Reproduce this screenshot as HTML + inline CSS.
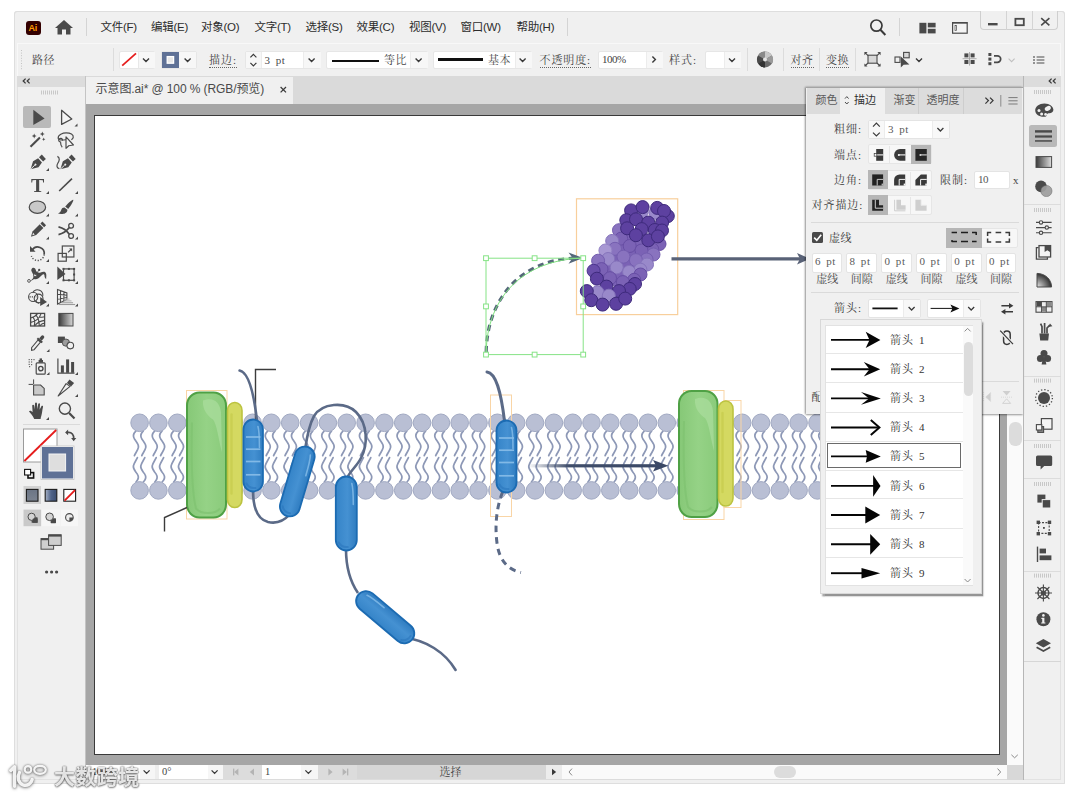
<!DOCTYPE html>
<html lang="zh-CN">
<head>
<meta charset="utf-8">
<title>示意图.ai</title>
<style>
html,body{margin:0;padding:0}
body{width:1080px;height:797px;position:relative;overflow:hidden;background:#fff;
 font-family:"Liberation Sans","Noto Sans CJK SC",sans-serif;font-size:12px;color:#333}
.a{position:absolute}
.sans{font-family:"Liberation Sans","Noto Sans CJK SC",sans-serif}
.serif{font-family:"Liberation Serif","Noto Serif CJK SC",serif}
.mono{font-family:"Liberation Mono","Noto Serif CJK SC",monospace}
.t{position:absolute;white-space:nowrap;line-height:1}
.box{position:absolute;background:#fff;box-sizing:border-box}
.vsep{position:absolute;width:1px;background:#d4d4d4}
svg{position:absolute;overflow:visible}
</style>
</head>
<body>

<!-- window frame -->
<div class="a" style="left:13.5px;top:11px;width:1051px;height:772.5px;background:#f0f0f0;border-radius:3px 3px 0 0;box-shadow:0 0 0 1px #e6e6e6 inset"></div>
<div class="a" style="left:17px;top:43px;width:1044px;height:737px;border:1px solid #e2e2e2;box-sizing:border-box"></div>
<div class="a" style="left:13.5px;top:11px;width:1051px;height:772.5px;border:1px solid #dedede;border-radius:3px 3px 0 0;box-sizing:border-box"></div>
<!-- menu bar -->
<div class="a" style="left:26px;top:21px;width:15px;height:14px;background:#330000;border-radius:3px"></div>
<div class="t sans" style="left:28.5px;top:23.5px;font-size:9px;font-weight:bold;color:#ff9a00;letter-spacing:-0.3px">Ai</div>
<svg style="left:54px;top:19px" width="20" height="16" viewBox="0 0 20 16"><path d="M10 1 L1 9 H3.5 V15.5 H8 V10.5 H12 V15.5 H16.5 V9 H19 Z" fill="#4a4a4a"/></svg>
<div class="vsep" style="left:86px;top:18px;height:18px"></div>
<div class="t sans" style="left:100.5px;top:21.5px;font-size:11.5px;letter-spacing:-.25px;color:#2c2c2c">文件(F)</div>
<div class="t sans" style="left:151px;top:21.5px;font-size:11.5px;letter-spacing:-.25px;color:#2c2c2c">编辑(E)</div>
<div class="t sans" style="left:201px;top:21.5px;font-size:11.5px;letter-spacing:-.25px;color:#2c2c2c">对象(O)</div>
<div class="t sans" style="left:254.5px;top:21.5px;font-size:11.5px;letter-spacing:-.25px;color:#2c2c2c">文字(T)</div>
<div class="t sans" style="left:305.5px;top:21.5px;font-size:11.5px;letter-spacing:-.25px;color:#2c2c2c">选择(S)</div>
<div class="t sans" style="left:356.5px;top:21.5px;font-size:11.5px;letter-spacing:-.25px;color:#2c2c2c">效果(C)</div>
<div class="t sans" style="left:409px;top:21.5px;font-size:11.5px;letter-spacing:-.25px;color:#2c2c2c">视图(V)</div>
<div class="t sans" style="left:460.5px;top:21.5px;font-size:11.5px;letter-spacing:-.25px;color:#2c2c2c">窗口(W)</div>
<div class="t sans" style="left:516.5px;top:21.5px;font-size:11.5px;letter-spacing:-.25px;color:#2c2c2c">帮助(H)</div>
<div class="vsep" style="left:567px;top:18px;height:18px"></div>
<!-- control bar -->
<div class="a" style="left:17px;top:43px;width:1044px;height:33px;background:#f0f0f0;border:1px solid #f8f8f8;border-bottom:none;box-sizing:border-box"></div>
<!-- tab bar -->
<div class="a" style="left:86px;top:76px;width:937px;height:27.5px;background:#dadada"></div>
<div class="a" style="left:86px;top:77px;width:207px;height:26.5px;background:#f0f0f0"></div>
<div class="t sans" style="left:95.6px;top:82.5px;font-size:12px;letter-spacing:-.1px;color:#4a4a4a">示意图.ai* @ 100 % (RGB/预览)</div>
<!-- canvas bg -->
<div class="a" style="left:86px;top:103.5px;width:937px;height:661.5px;background:#a6a6a6"></div>
<div class="a" style="left:94px;top:114.5px;width:906px;height:640.5px;background:#fff;border:1px solid #3a3a3a;box-sizing:border-box"></div>

<!-- control bar contents -->
<div class="t serif" style="left:32px;top:54.5px;font-size:11px;color:#444;letter-spacing:.6px">路径</div>
<div class="vsep" style="left:113px;top:48px;height:23px;background:#dcdcdc"></div>
<!-- fill -->
<div class="box" style="left:119px;top:51px;width:36px;height:18px;border-radius:2px;border:1px solid #e6e6e6"></div>
<div class="a" style="left:138px;top:52px;width:16px;height:16px;background:#f7f7f7;border-left:1px solid #e8e8e8"></div>
<!-- stroke -->
<div class="box" style="left:161px;top:51px;width:36px;height:18px;border-radius:2px;border:1px solid #e6e6e6"></div>
<div class="a" style="left:162px;top:52px;width:17px;height:16px;background:#5f7196"></div>
<div class="a" style="left:179px;top:52px;width:17px;height:16px;background:#f7f7f7"></div>
<div class="t serif" style="left:209px;top:55px;font-size:11px;color:#444;letter-spacing:1px;border-bottom:1px dotted #666;padding-bottom:1px">描边:</div>
<!-- weight -->
<div class="box" style="left:245px;top:51px;width:76px;height:18px;border-radius:2px;border:1px solid #e6e6e6"></div>
<div class="a" style="left:246px;top:52px;width:15px;height:16px;background:#f7f7f7;border-right:1px solid #ececec"></div>
<div class="a" style="left:303px;top:52px;width:17px;height:16px;background:#f7f7f7;border-left:1px solid #ececec"></div>
<div class="t serif" style="left:264.5px;top:55px;font-size:11px;color:#4a4a4a;letter-spacing:.7px;word-spacing:1.5px">3 pt</div>
<!-- profile -->
<div class="box" style="left:325.5px;top:51px;width:102px;height:18px;border-radius:2px;border:1px solid #e6e6e6"></div>
<div class="a" style="left:410px;top:52px;width:16.5px;height:16px;background:#f7f7f7;border-left:1px solid #ececec"></div>
<div class="a" style="left:332px;top:60px;width:47px;height:1.6px;background:#111"></div>
<div class="t serif" style="left:384px;top:55px;font-size:11px;letter-spacing:.6px;color:#444">等比</div>
<!-- brush -->
<div class="box" style="left:433px;top:51px;width:99px;height:18px;border-radius:2px;border:1px solid #e6e6e6"></div>
<div class="a" style="left:514.5px;top:52px;width:16.5px;height:16px;background:#f7f7f7;border-left:1px solid #ececec"></div>
<div class="a" style="left:438px;top:58px;width:45px;height:2.6px;background:#111"></div>
<div class="t serif" style="left:488px;top:55px;font-size:11px;letter-spacing:.6px;color:#444">基本</div>
<!-- opacity -->
<div class="t serif" style="left:539.5px;top:55px;font-size:11px;color:#444;border-bottom:1px dotted #666;padding-bottom:1px;letter-spacing:.9px">不透明度:</div>
<div class="box" style="left:598px;top:51px;width:65px;height:18px;border-radius:2px;border:1px solid #e6e6e6"></div>
<div class="a" style="left:646px;top:52px;width:16px;height:16px;background:#f7f7f7;border-left:1px solid #ececec"></div>
<div class="t serif" style="left:602px;top:53.5px;font-size:11px;color:#444;letter-spacing:-.5px">100%</div>
<div class="t serif" style="left:669px;top:55px;font-size:11px;color:#444;letter-spacing:1px">样式:</div>
<div class="box" style="left:705px;top:51px;width:36px;height:18px;border-radius:2px;border:1px solid #e6e6e6"></div>
<div class="a" style="left:724px;top:52px;width:16px;height:16px;background:#f7f7f7;border-left:1px solid #ececec"></div>
<div class="vsep" style="left:747px;top:48px;height:23px;background:#dcdcdc"></div>
<div class="vsep" style="left:783px;top:48px;height:23px;background:#dcdcdc"></div>
<div class="t serif" style="left:790.5px;top:55px;font-size:11px;color:#444;letter-spacing:.6px;border-bottom:1px dotted #666;padding-bottom:1px">对齐</div>
<div class="vsep" style="left:819px;top:48px;height:23px;background:#dcdcdc"></div>
<div class="t serif" style="left:826px;top:55px;font-size:11px;color:#444;letter-spacing:.6px;border-bottom:1px dotted #666;padding-bottom:1px">变换</div>
<div class="vsep" style="left:855px;top:48px;height:23px;background:#dcdcdc"></div>
<div class="vsep" style="left:899px;top:18px;height:18px"></div>
<!-- window buttons -->
<div class="a" style="left:980px;top:11px;width:78px;height:19px;border:1px solid #cfcfcf;border-top:none;border-radius:0 0 4px 4px;box-sizing:border-box;background:#f0f0f0"></div>
<div class="a" style="left:1006px;top:11px;width:1px;height:19px;background:#d4d4d4"></div>
<div class="a" style="left:1031.5px;top:11px;width:1px;height:19px;background:#d4d4d4"></div>
<svg style="left:0;top:0" width="1080" height="797" viewBox="0 0 1080 797">
<g fill="none" stroke="#3a3a3a" stroke-width="1.4">
<!-- grip dots of control bar -->
<path d="M21.5 50 V70" stroke="#c4c4c4" stroke-width="1" stroke-dasharray="1 1.6"/>
<!-- chevrons -->
<path d="M143 58.6 l3 3 3-3 M184.6 58.6 l3 3 3-3 M308.6 58.6 l3 3 3-3 M415.6 58.6 l3 3 3-3 M519.6 58.6 l3 3 3-3 M729 58.6 l3 3 3-3 M916 58.6 l3 3 3-3"/>
<path d="M652.4 56.6 l3 3 -3 3"/>
<path d="M1008.6 58.6 l3 3 3-3" stroke="#c0c0c0" stroke-width="1.1"/>
<path d="M250.4 57.4 l3-3 3 3 M250.4 62.8 l3 3 3-3" stroke-width="1.2"/>
<!-- fill slash -->
<path d="M122.2 65.6 L136 53.4" stroke="#e51c1c" stroke-width="1.8"/>
<!-- stroke inner square -->
<rect x="167.2" y="56.6" width="6.4" height="6.6" fill="#e8e8e8" stroke="#fff" stroke-width="1.3"/>
<!-- search -->
<circle cx="876.4" cy="25.6" r="5.6" stroke="#3a3a3a" stroke-width="1.7"/><path d="M880.4 29.8 L885.4 35" stroke-width="2"/>
<!-- window buttons icons -->
<path d="M988 24.2 H997.6" stroke="#4a4a4a" stroke-width="2.4"/>
<rect x="1015.4" y="18.8" width="8.4" height="6.4" stroke="#4a4a4a" stroke-width="1.8"/>
<path d="M1041.2 18.2 L1049.4 25.4 M1049.4 18.2 L1041.2 25.4" stroke="#4a4a4a" stroke-width="1.6"/>
</g>
<g fill="#4a4a4a">
<!-- workspace icon -->
<rect x="919.4" y="22.8" width="7" height="10.6"/><rect x="927.8" y="22.8" width="7.8" height="4.6"/><rect x="927.8" y="28.8" width="7.8" height="4.6"/>
<rect x="952.6" y="22.6" width="14.6" height="10.6" fill="#f4f4f4" stroke="#4a4a4a" stroke-width="1.2"/><rect x="952.6" y="22" width="14.6" height="1.6"/><rect x="955" y="25.4" width="1.6" height="5" fill="none" stroke="#4a4a4a" stroke-width=".7"/>
<!-- recolor wheel -->
<circle cx="765" cy="59.4" r="8" fill="#6a6a6a"/>
<path d="M765 59.4 L765 51.4 A8 8 0 0 1 771.9 55.4Z" fill="#c8c8c8"/><path d="M765 59.4 L771.9 55.4 A8 8 0 0 1 771.9 63.4Z" fill="#9a9a9a"/><path d="M765 59.4 L758.1 63.4 A8 8 0 0 1 758.1 55.4Z" fill="#4a4a4a"/><path d="M765 59.4 L758.1 55.4 A8 8 0 0 1 765 51.4Z" fill="#8a8a8a"/><path d="M765 59.4 L765 67.4 A8 8 0 0 1 758.1 63.4Z" fill="#333"/>
<circle cx="765" cy="59.4" r="2" fill="#e4e4e4"/>
<!-- transform icon -->
<rect x="868" y="55.2" width="9" height="8" fill="#d8d8d8" stroke="#4a4a4a" stroke-width="1.1"/>
<path d="M864.4 52 h3.2 l-1.2 1.2 2 2 -.8 .8 -2 -2 -1.2 1.2z M880.6 52 v3.2 l-1.2 -1.2 -2 2 -.8 -.8 2 -2 -1.2 -1.2z M864.4 66.6 v-3.2 l1.2 1.2 2 -2 .8 .8 -2 2 1.2 1.2z M880.6 66.6 h-3.2 l1.2 -1.2 -2 -2 .8 -.8 2 2 1.2 -1.2z"/>
<!-- isolate icon -->
<rect x="895" y="57" width="5" height="5.4" fill="none" stroke="#4a4a4a" stroke-width="1.1"/>
<rect x="903.6" y="52.4" width="5.6" height="5.4" fill="#d8d8d8" stroke="#4a4a4a" stroke-width="1.1"/>
<path d="M900.8 56.4 V67.4 L903.6 64.8 L909.4 64.4Z"/>
<!-- grid icon -->
<rect x="964.4" y="53.4" width="4" height="4"/><rect x="970.6" y="53.4" width="4" height="4"/><rect x="964.4" y="60" width="4" height="4"/><rect x="970.6" y="60" width="4" height="4"/>
<path d="M962.6 58.7 H976.6 M969.5 52 V65.6" stroke="#9a9a9a" stroke-width=".8"/>
<!-- align to icon -->
<rect x="988.4" y="53" width="3" height="3"/><rect x="988.4" y="57.6" width="3" height="3"/><rect x="988.4" y="62.2" width="3" height="3"/>
<path d="M994 55.8 H997.4 A3.3 3.3 0 0 1 997.4 62.4 H994" fill="none" stroke="#4a4a4a" stroke-width="1.7"/>
<!-- list icon -->
<path d="M1036.6 57 H1044.4 M1036.6 60 H1044.4 M1036.6 63 H1044.4" stroke="#4a4a4a" stroke-width="1.2"/><rect x="1033.2" y="56.3" width="1.6" height="1.4"/><rect x="1033.2" y="59.3" width="1.6" height="1.4"/><rect x="1033.2" y="62.3" width="1.6" height="1.4"/>
<!-- tab close -->
<path d="M280.6 87 L286 92.4 M286 87 L280.6 92.4" stroke="#3a3a3a" stroke-width="1.25"/>
</g>
</svg>

<!-- left toolbar -->
<div class="a" style="left:17px;top:76px;width:68px;height:11px;background:#dcdcdc"></div>
<div class="a" style="left:85px;top:76px;width:1px;height:704px;background:#c4c4c4"></div>
<div class="a" style="left:23px;top:106px;width:28px;height:22px;background:#b9b9b9;border-radius:2px"></div>
<div class="a" style="left:23px;top:424px;width:57px;height:1px;background:#dadada"></div>
<div class="t serif" style="left:30.6px;top:176.4px;font-size:19px;font-weight:bold;color:#4a4a4a;transform:scaleX(1.05);transform-origin:0 0">T</div>
<svg style="left:0;top:0" width="1080" height="797" viewBox="0 0 1080 797">
<g fill="#4a4a4a" stroke="none">
<!-- header chevrons -->
<path d="M25.6 78.6 L23.2 81 L25.6 83.4 M29.6 78.6 L27.2 81 L29.6 83.4" fill="none" stroke="#3a3a3a" stroke-width="1.3"/>
<!-- grip -->
<g stroke="#c8c8c8" stroke-width="1" fill="none"><path d="M41.5 90.5v4M43.5 90.5v4M45.5 90.5v4M47.5 90.5v4M49.5 90.5v4M51.5 90.5v4M53.5 90.5v4M55.5 90.5v4M57.5 90.5v4"/></g>
<!-- small corner triangles -->
<g fill="#4a4a4a">
<path d="M77.5 123.5v3h-3z"/>
<path d="M49 168v3h-3z"/>
<path d="M49 191v3h-3zM78 191v3h-3z"/>
<path d="M49 213.5v3h-3zM78 213.5v3h-3z"/>
<path d="M49 236.5v3h-3zM78 236.5v3h-3z"/>
<path d="M49 259v3h-3zM78 259v3h-3z"/>
<path d="M49 281v3h-3zM78 281v3h-3z"/>
<path d="M49 303.5v3h-3zM78 303.5v3h-3z"/>
<path d="M49.5 349v3h-3z"/>
<path d="M49.5 372v3h-3zM78 372v3h-3z"/>
<path d="M78 394v3h-3z"/>
<path d="M49 417v3h-3z"/>
</g>
<!-- r1 selection tools -->
<path d="M33.3 109.8 V125 L44.6 118.4 Z"/>
<path d="M61.6 110.3 V124.4 L71.8 119 Z" fill="#f4f4f4" stroke="#4a4a4a" stroke-width="1.3" stroke-linejoin="round"/>
<!-- r2 magic wand -->
<g transform="translate(37.7 140)">
<path d="M-7.2 6.8 L2.2 -2.4" stroke="#4a4a4a" stroke-width="2.1" fill="none"/>
<path d="M-3.5 -6.4 l.7 1.7 1.7 .7 -1.7 .7 -.7 1.7 -.7 -1.7 -1.7 -.7 1.7 -.7z"/>
<path d="M4.6 -8.4 l.7 1.7 1.7 .7 -1.7 .7 -.7 1.7 -.7 -1.7 -1.7 -.7 1.7 -.7z"/>
<path d="M6 -2.4 l.5 1.2 1.2 .5 -1.2 .5 -.5 1.2 -.5 -1.2 -1.2 -.5 1.2 -.5z"/>
</g>
<!-- r2 lasso -->
<g transform="translate(67.6 141.6) scale(.94)" fill="none" stroke="#4a4a4a" stroke-width="1.25">
<path d="M-1.7 -2 C-6 -1.5 -9.5 -1 -10 -3.5 C-10.5 -7.5 -5 -9.3 -1.5 -9.3 C3 -9.3 6.5 -7.5 6 -4.5 C5.8 -3.4 5 -2.6 4 -2"/>
<path d="M-5.5 -1 a2 2 0 1 0 -2 1.5 c0 2 .5 4.5 1.8 5.5"/>
<path d="M-1.7 -5 V7.2 L1.2 4.4 L6.2 3.6 Z" fill="#f4f4f4" stroke-linejoin="round"/>
</g>
<!-- r3 pen -->
<g transform="translate(37.4 162.8) rotate(47)">
<path d="M0 9.4 L-4 2.2 L-2.8 -3.6 H2.8 L4 2.2 Z"/>
<rect x="-3" y="-8.8" width="6" height="3.8"/>
<path d="M0 9.4 V3.5" stroke="#f0f0f0" stroke-width=".9"/>
<circle cx="0" cy="2.6" r="1" fill="#f0f0f0"/>
</g>
<!-- r3 curvature pen -->
<g transform="translate(67.2 162.8) rotate(47)">
<path d="M0 9.4 L-4 2.2 L-2.8 -3.6 H2.8 L4 2.2 Z"/>
<rect x="-3" y="-8.8" width="6" height="3.8"/>
<path d="M0 9.4 V3.5" stroke="#f0f0f0" stroke-width=".9"/>
<circle cx="0" cy="2.6" r="1" fill="#f0f0f0"/>
</g>
<path d="M57.4 156.4 C60.3 157.8 59.3 160.8 57.8 163.3 C56.3 165.8 56.8 168.3 59.4 168.6" fill="none" stroke="#4a4a4a" stroke-width="1.2"/>
<!-- r4 line -->
<path d="M59.2 191 L72 178.6" stroke="#4a4a4a" stroke-width="1.6" fill="none"/>
<!-- r5 ellipse, brush -->
<ellipse cx="37.4" cy="207.2" rx="8.2" ry="6.2" fill="#c9c9c9" stroke="#4a4a4a" stroke-width="1.2"/>
<g transform="translate(66 207)">
<path d="M7.2 -7.2 C8 -6.5 5 -1.5 2.2 2 L-.8 -.4 C1.8 -3.6 6.4 -7.8 7.2 -7.2Z"/>
<path d="M-1.6 .4 L1.4 2.8 C1.6 5.2 -1 7 -3.5 7 C-5.6 7.1 -7 7 -8 6.6 C-6 5.8 -5.2 4.4 -4.6 2.6 C-4.2 1.2 -3 .3 -1.6 .4Z"/>
</g>
<!-- r6 pencil, scissors -->
<g transform="translate(37.6 230) rotate(45)">
<path d="M-2.6 -9.4 H2.6 V-6.6 H-2.6Z"/>
<path d="M-2.6 -5.6 H2.6 V4.6 L0 9.4 L-2.6 4.6Z"/>
<path d="M-1.2 5.2 H1.2 L0 7.4Z" fill="#f0f0f0"/>
</g>
<g transform="translate(66.5 231)" fill="none" stroke="#4a4a4a">
<circle cx="4.6" cy="-5.2" r="2.4" stroke-width="1.3"/>
<circle cx="4.6" cy="5" r="2.4" stroke-width="1.3"/>
<path d="M-8 -4.2 C-3 -3 0 -1 2.8 3.2 M-8 3.6 C-3 2.6 0 .4 2.8 -3.4" stroke-width="1.7"/>
</g>
<!-- r7 rotate, scale -->
<g transform="translate(37.6 253.5)">
<path d="M-5.4 -3.6 A6.6 6.6 0 0 1 6.6 1" fill="none" stroke="#4a4a4a" stroke-width="1.7"/>
<path d="M6.6 1 A6.6 6.6 0 0 1 -6.2 2.6" fill="none" stroke="#4a4a4a" stroke-width="1.4" stroke-dasharray="1.2 1.6"/>
<path d="M-7.6 -7.4 V-1.8 H-2Z"/>
</g>
<g transform="translate(66.5 254)" fill="none" stroke="#4a4a4a" stroke-width="1.2">
<rect x="-4.2" y="-8" width="11.6" height="11" />
<rect x="-8.4" y="-.6" width="8.2" height="7.8"/>
<path d="M1.6 -1.6 L5 -5"/><path d="M2.6 -5.6 H5.6 V-2.6Z" fill="#4a4a4a" stroke="none"/>
</g>
<!-- r8 width, free transform -->
<g transform="translate(37.6 275.5)">
<path d="M-8.4 5.2 C-5 4.6 -3.4 2 -4.4 -1 C-5.2 -3.6 -7 -4.6 -6 -6.6 C-5 -8.6 -2.4 -8 -2 -6 C-1.4 -3 1 -2.4 3 -3 C5.4 -3.8 8 -4.4 8.6 -1.4 C9 .8 8.4 2.4 8.6 3.6 C7 3 7 1 6.8 -.4 C6.6 -2 5 -1.4 3.6 .2 C1.6 2.6 -1.2 4.6 -3.6 3.4 C-5 4.6 -6.6 5.6 -8.4 5.2Z"/>
<circle cx="-8.6" cy="5.4" r="1.4" fill="#f0f0f0" stroke="#4a4a4a" stroke-width=".9"/>
<circle cx="-2.6" cy="-.2" r="1.5" fill="#f0f0f0" stroke="#4a4a4a" stroke-width=".9"/>
<circle cx="1.6" cy="-5.6" r="1.1"/>
<path d="M-2.6 -.2 L1.6 -5.6" stroke="#4a4a4a" stroke-width=".8"/>
</g>
<g transform="translate(66.5 275.5)">
<rect x="-3" y="-6.6" width="10.6" height="11.4" fill="none" stroke="#4a4a4a" stroke-width="1.2"/>
<path d="M-9.2 -9 V4.4 L-1 -1.6Z"/>
<g><rect x="-4" y="-7.6" width="2" height="2"/><rect x="1.4" y="-7.6" width="2" height="2"/><rect x="6.6" y="-7.6" width="2" height="2"/><rect x="6.6" y="-2" width="2" height="2"/><rect x="6.6" y="3.8" width="2" height="2"/><rect x="1.4" y="3.8" width="2" height="2"/><rect x="-4" y="3.8" width="2" height="2"/></g>
</g>
<!-- r9 shape builder, perspective grid -->
<g transform="translate(37.6 297.5)" fill="none" stroke="#4a4a4a" stroke-width="1.1">
<circle cx="-4.4" cy="-.6" r="4.6"/>
<path d="M-4.6 -5 C-3.6 -7.6 -.2 -8.2 2 -7.2 C4.8 -6 5.4 -3.6 5.2 -1.6 M-1.8 3.2 C-1 4.6 .2 5.4 1.4 5.6"/>
<circle cx="1" cy="1" r="4.4"/>
<path d="M-8 -.6 H-1" stroke-dasharray="1.2 1"/>
<path d="M2.6 -.6 V8.6 L9.4 4.6Z" fill="#4a4a4a" stroke="none"/>
</g>
<g transform="translate(66.5 297.5)" fill="none" stroke="#4a4a4a" stroke-width="1.1">
<path d="M-9 -8 L.4 -4.6 V2 L-9 6.6Z M-9 -3.2 L.4 -2.2 M-9 1.8 L.4 0 M-6 -7 V5.2 M-2.6 -5.8 V3.6"/>
<path d="M-1 1.6 H3" stroke="#bdbdbd"/><path d="M-3 3.4 H5" stroke="#b0b0b0"/><path d="M-5 5.2 H6.6" stroke="#a4a4a4"/><path d="M-8 7 H8.6" stroke="#9a9a9a"/>
</g>
<!-- r10 mesh, gradient -->
<g transform="translate(37.6 320)" fill="none" stroke="#4a4a4a" stroke-width="1.1">
<rect x="-7" y="-6.6" width="14" height="12.6" stroke-width="1.3"/>
<path d="M-7 -2 C-3 -3 -1 -5 0 -6.6 M-7 2.4 C-2 1.6 2 -2 3.6 -6.6 M-3 6 C-1 3 3 1 7 .4 M2.4 6 C3 4.4 5 3.4 7 3.2 M-1.4 -4.6 C1 -2 2 3 1.4 6 M-4.6 -2.6 C-3 -1 -2.6 3 -3.4 6 M2 -3 C4 -2.6 6 -2.8 7 -3.2"/>
</g>
<defs><linearGradient id="tg" x1="0" x2="1" y1="0" y2="0"><stop offset="0" stop-color="#3a3a3a"/><stop offset="1" stop-color="#d8d8d8"/></linearGradient></defs>
<rect x="58.8" y="313.4" width="14.2" height="12.6" fill="url(#tg)" stroke="#4a4a4a" stroke-width="1"/>
<!-- r11 eyedropper, blend -->
<g transform="translate(37.6 343) rotate(40)">
<path d="M-1.6 -2.6 H1.6 V7.4 L0 9.4 L-1.6 7.4Z" fill="#f0f0f0" stroke="#4a4a4a" stroke-width="1.1"/>
<rect x="-3.2" y="-4.4" width="6.4" height="2"/>
<path d="M-1.7 -4.4 V-7.6 A1.7 1.9 0 0 1 1.7 -7.6 V-4.4Z"/>
</g>
<g transform="translate(66.5 343)">
<rect x="-8.6" y="-6.4" width="7" height="6.4"/>
<circle cx="-.6" cy="-.4" r="3.6" fill="#9c9c9c" stroke="#4a4a4a" stroke-width=".9"/>
<circle cx="3.8" cy="2.6" r="3.3" fill="#f0f0f0" stroke="#4a4a4a" stroke-width="1.1"/>
</g>
<!-- r12 symbol sprayer, graph -->
<g transform="translate(37.6 367)">
<rect x="-1.4" y="-4.2" width="9" height="11.4" rx="1" fill="#f0f0f0" stroke="#4a4a4a" stroke-width="1.2"/>
<rect x="1" y="-7" width="4.4" height="2.6"/><rect x="2" y="-8.6" width="2.4" height="1.6"/>
<circle cx="3.2" cy="1.6" r="2.2" fill="#f0f0f0" stroke="#4a4a4a" stroke-width="1.4"/>
<g fill="#666"><rect x="-9" y="-8" width="1.2" height="1.2"/><rect x="-6.6" y="-8" width="1.2" height="1.2"/><rect x="-4.2" y="-8" width="1.2" height="1.2"/><rect x="-9" y="-5.6" width="1.2" height="1.2"/><rect x="-6.6" y="-5.6" width="1.2" height="1.2"/><rect x="-9" y="-3.2" width="1.2" height="1.2"/><rect x="-6.6" y="-3" width="1.2" height="1.2"/><rect x="-8.6" y="-1" width="1.2" height="1.2"/></g>
</g>
<g transform="translate(66.5 367)">
<path d="M-8.6 -8.6 V6.2 H8" fill="none" stroke="#4a4a4a" stroke-width="1.2"/>
<rect x="-5.6" y="-1.6" width="3" height="7.4"/><rect x="-.4" y="-7.6" width="3" height="13.4"/><rect x="4.6" y="-5" width="3" height="10.8"/>
</g>
<!-- r13 artboard, slice -->
<g transform="translate(37.6 389)">
<path d="M-4 -4 H3 L6.6 -.6 V6 H-4Z" fill="#c9c9c9" stroke="#4a4a4a" stroke-width="1.1"/>
<path d="M-9 -4.6 H-4.6 M-4 -9.6 V-5" stroke="#4a4a4a" stroke-width="1" fill="none"/>
</g>
<g transform="translate(66.5 389)">
<path d="M-8.4 7 L-.4 -5.4 L3.6 -2.6 Z" fill="#f0f0f0" stroke="#4a4a4a" stroke-width="1.1" stroke-linejoin="round"/>
<path d="M.4 -6 L3 -9.4 L7.6 -6 L4.6 -2.6Z"/>
</g>
<!-- r14 hand, zoom -->
<g transform="translate(37.6 411)">
<path d="M-3.4 8 C-4.6 5 -7 2.6 -8.6 .6 C-8 -.8 -6.4 -.4 -5 1.2 L-5.4 -5.4 C-5.2 -6.6 -3.8 -6.6 -3.4 -5.4 L-2.8 -1.6 L-2.6 -7.6 C-2.4 -8.8 -.8 -8.8 -.6 -7.6 L-.4 -1.8 L.6 -7 C.9 -8.2 2.4 -8 2.4 -6.8 L2 -1.2 L3.8 -4.8 C4.4 -5.8 5.8 -5.2 5.4 -4 C4.6 -1 4.6 2 3.8 4.4 C3.4 5.8 3 7 3 8Z"/>
</g>
<g transform="translate(66.5 411)" fill="none" stroke="#4a4a4a">
<circle cx="-1.6" cy="-2.4" r="5.6" stroke-width="1.4"/>
<path d="M2.6 2 L8 7.6" stroke-width="2.2"/>
</g>
<!-- fill / stroke -->
<rect x="23.5" y="429" width="33.5" height="33" fill="#fff" stroke="#9a9a9a" stroke-width="1"/>
<path d="M24.4 461 L56.2 430" stroke="#e51c1c" stroke-width="1.8" fill="none"/>
<rect x="41" y="446" width="33" height="33.5" fill="#fff" stroke="#c4c4c4" stroke-width=".8"/>
<rect x="42" y="447" width="31" height="31.5" fill="#5f7196"/>
<rect x="49" y="454" width="16.6" height="17" fill="#dedede" stroke="#f4f4f4" stroke-width="1"/>
<g transform="translate(70.5 435.4)"><path d="M-2.6 -3 C1.4 -3.4 3.4 -.4 3.2 3" fill="none" stroke="#4a4a4a" stroke-width="1.7"/><path d="M-2.4 -5.8 V-.2 L-5.4 -3Z M.6 2.6 H5.8 L3.2 5.8Z"/></g>
<rect x="28" y="472.6" width="5.6" height="5.4" fill="#f0f0f0" stroke="#111" stroke-width="1.6"/>
<rect x="24.6" y="469.4" width="6" height="5.6" fill="#fff" stroke="#111" stroke-width="1.1"/>
<!-- color / gradient / none -->
<rect x="23.5" y="486" width="17.5" height="18" fill="#d2d2d2"/>
<defs><linearGradient id="cg1" x1="0" x2="0" y1="0" y2="1"><stop offset="0" stop-color="#6b7585"/><stop offset="1" stop-color="#7b8390"/></linearGradient>
<linearGradient id="cg2" x1="0" x2="1" y1="0" y2="0"><stop offset="0" stop-color="#a9b4c8"/><stop offset=".5" stop-color="#50648a"/><stop offset="1" stop-color="#3b4d70"/></linearGradient></defs>
<rect x="26.4" y="489.4" width="11.6" height="11.8" fill="url(#cg1)" stroke="#1c1c1c" stroke-width="1.1"/>
<rect x="45.2" y="489.4" width="11.6" height="11.8" fill="url(#cg2)" stroke="#1c1c1c" stroke-width="1.1"/>
<rect x="63.8" y="489.4" width="11.8" height="11.8" fill="#fff" stroke="#1c1c1c" stroke-width="1.1"/>
<path d="M64.6 500.6 L75 490.2" stroke="#e51c1c" stroke-width="1.9"/>
<!-- draw modes -->
<rect x="23.5" y="509.6" width="17.6" height="16.6" fill="#c9c9c9"/>
<rect x="41.6" y="509.6" width="18.4" height="16.6" fill="#f6f6f6"/><rect x="60.6" y="509.6" width="17.4" height="16.6" fill="#f6f6f6"/>
<g transform="translate(33 518)"><rect x="-1.4" y="-.8" width="6" height="5.6" rx=".6"/><circle cx="-1.4" cy="-1.2" r="3.6" fill="#d4d4d4" stroke="#4a4a4a" stroke-width="1"/><rect x="-.2" y=".4" width="4.8" height="4.4" rx=".4"/></g>
<g transform="translate(51 518)"><rect x="-.4" y=".2" width="5.4" height="5" rx=".6"/><circle cx="-1.4" cy="-1.2" r="3.8" fill="#d4d4d4" stroke="#4a4a4a" stroke-width="1"/></g>
<g transform="translate(69.4 517.4)"><circle cx="0" cy="0" r="3.8" fill="#ececec" stroke="#4a4a4a" stroke-width="1.1"/><path d="M0 0 H3.8 A3.8 3.8 0 0 1 0 3.8Z"/></g>
<!-- screen mode -->
<rect x="41" y="538.6" width="12.6" height="10.6" fill="#cfcfcf" stroke="#4a4a4a" stroke-width="1"/><rect x="41" y="538.4" width="12.6" height="1.8"/>
<rect x="48.6" y="534.8" width="12.6" height="10.6" fill="#cfcfcf" stroke="#4a4a4a" stroke-width="1"/><rect x="48.6" y="534.6" width="12.6" height="2"/>
<circle cx="46.6" cy="572" r="1.6"/><circle cx="51.6" cy="572" r="1.6"/><circle cx="56.6" cy="572" r="1.6"/>
</g>
</svg>

<!-- scrollbars & status bar -->
<div class="a" style="left:1007px;top:103px;width:16px;height:662px;background:#fafafa"></div>
<div class="a" style="left:1008.8px;top:422px;width:13px;height:23.5px;background:#dcdcdc;border-radius:6px"></div>
<div class="a" style="left:86px;top:764.5px;width:937px;height:15px;background:#dcdcdc"></div>
<div class="a" style="left:86px;top:765px;width:54px;height:14px;background:#fff"></div>
<div class="a" style="left:140px;top:765px;width:15px;height:14px;background:#f6f6f6"></div>
<div class="a" style="left:155px;top:765px;width:4px;height:14px;background:#ededed"></div>
<div class="a" style="left:159px;top:765px;width:49px;height:14px;background:#fff"></div>
<div class="a" style="left:208px;top:765px;width:15px;height:14px;background:#f6f6f6"></div>
<div class="a" style="left:262px;top:765px;width:39px;height:14px;background:#fff"></div>
<div class="a" style="left:301px;top:765px;width:16.5px;height:14px;background:#f6f6f6"></div>
<div class="a" style="left:356.5px;top:765px;width:189px;height:14px;background:#d6d6d6"></div>
<div class="a" style="left:545.5px;top:765px;width:16px;height:14px;background:#ececec"></div>
<div class="a" style="left:561.5px;top:765px;width:445.5px;height:14px;background:#fafafa"></div>
<div class="a" style="left:774px;top:766px;width:22px;height:12px;background:#dcdcdc;border-radius:6px"></div>
<div class="a" style="left:1007px;top:765px;width:16px;height:14.5px;background:#d8d8d8"></div>
<div class="t serif" style="left:92px;top:767px;font-size:10.5px;color:#444;letter-spacing:-.4px">100%</div>
<div class="t serif" style="left:162px;top:767px;font-size:10.5px;color:#444">0°</div>
<div class="t serif" style="left:265px;top:767px;font-size:10.5px;color:#444">1</div>
<div class="t serif" style="left:439.5px;top:766.5px;font-size:11px;color:#444">选择</div>
<svg style="left:0;top:0" width="1080" height="797" viewBox="0 0 1080 797">
<g fill="none" stroke="#3a3a3a" stroke-width="1.3">
<path d="M143.6 770.4 l3 3 3-3 M211.6 770.4 l3 3 3-3 M305.4 770.4 l3 3 3-3"/>
<path d="M572 768.6 l-3 3.4 3 3.4 M997.6 768.6 l3 3.4 -3 3.4 M1011.4 754.8 l3.2 3 3.2 -3" stroke="#8a8a8a" stroke-width="1"/>
</g>
<g fill="#b4b4b4"><path d="M238.4 768.6 v6.8 l-4.2 -3.4z"/><rect x="233" y="768.6" width="1.3" height="6.8"/><path d="M254 768.6 v6.8 l-4.2 -3.4z"/>
<path d="M328.4 768.6 v6.8 l4.2 -3.4z"/><path d="M342.6 768.6 v6.8 l4.2 -3.4z"/><rect x="347" y="768.6" width="1.3" height="6.8"/></g>
<path d="M552 768.8 v6.4 l4.2 -3.2z" fill="#3a3a3a"/>
</svg>

<!-- canvas artwork -->
<svg style="left:0;top:0" width="1080" height="797" viewBox="0 0 1080 797">
<defs>
<linearGradient id="arg" x1="0" x2="1" y1="0" y2="0"><stop offset="0" stop-color="#3f4d6a" stop-opacity="0"/><stop offset=".32" stop-color="#3f4d6a" stop-opacity="1"/><stop offset="1" stop-color="#3a4866"/></linearGradient>
<linearGradient id="grn" x1="0" x2="1" y1="0" y2="0"><stop offset="0" stop-color="#86c877"/><stop offset=".5" stop-color="#95d286"/><stop offset="1" stop-color="#8acb7b"/></linearGradient>
<linearGradient id="blu" x1="0" x2="1" y1="0" y2="0"><stop offset="0" stop-color="#3584c8"/><stop offset=".55" stop-color="#4591d2"/><stop offset="1" stop-color="#2f7cc0"/></linearGradient>
<symbol id="lip" overflow="visible">
<g fill="none" stroke="#8d98b6" stroke-width="1.7" stroke-linecap="round">
<path d="M-3.8 8.4 C-6 10.5 -7 13.5 -5 16.5 C-3 19.5 -.6 21.5 -1.2 24.5 C-1.8 27.5 -4 30 -5.2 32.8"/>
<path d="M3.6 8.4 C1.4 10.5 .4 13.5 2.4 16.5 C4.4 19.5 6.8 21.5 6.2 24.5 C5.6 27.5 3.4 30 2.2 32.8"/>
</g>
<circle r="8.8" fill="#b9bfd4" stroke="#a1a9c2" stroke-width="1"/>
</symbol>
</defs>
<use href="#lip" x="139.6" y="422.8"/>
<use href="#lip" transform="translate(139.6 490.4) scale(-1 -1)"/>
<use href="#lip" x="158.4" y="422.8"/>
<use href="#lip" transform="translate(158.4 490.4) scale(-1 -1)"/>
<use href="#lip" x="177.3" y="422.8"/>
<use href="#lip" transform="translate(177.3 490.4) scale(-1 -1)"/>
<use href="#lip" x="196.1" y="422.8"/>
<use href="#lip" transform="translate(196.1 490.4) scale(-1 -1)"/>
<use href="#lip" x="214.9" y="422.8"/>
<use href="#lip" transform="translate(214.9 490.4) scale(-1 -1)"/>
<use href="#lip" x="233.8" y="422.8"/>
<use href="#lip" transform="translate(233.8 490.4) scale(-1 -1)"/>
<use href="#lip" x="252.6" y="422.8"/>
<use href="#lip" transform="translate(252.6 490.4) scale(-1 -1)"/>
<use href="#lip" x="271.4" y="422.8"/>
<use href="#lip" transform="translate(271.4 490.4) scale(-1 -1)"/>
<use href="#lip" x="290.2" y="422.8"/>
<use href="#lip" transform="translate(290.2 490.4) scale(-1 -1)"/>
<use href="#lip" x="309.1" y="422.8"/>
<use href="#lip" transform="translate(309.1 490.4) scale(-1 -1)"/>
<use href="#lip" x="327.9" y="422.8"/>
<use href="#lip" transform="translate(327.9 490.4) scale(-1 -1)"/>
<use href="#lip" x="346.7" y="422.8"/>
<use href="#lip" transform="translate(346.7 490.4) scale(-1 -1)"/>
<use href="#lip" x="365.6" y="422.8"/>
<use href="#lip" transform="translate(365.6 490.4) scale(-1 -1)"/>
<use href="#lip" x="384.4" y="422.8"/>
<use href="#lip" transform="translate(384.4 490.4) scale(-1 -1)"/>
<use href="#lip" x="403.2" y="422.8"/>
<use href="#lip" transform="translate(403.2 490.4) scale(-1 -1)"/>
<use href="#lip" x="422.0" y="422.8"/>
<use href="#lip" transform="translate(422.0 490.4) scale(-1 -1)"/>
<use href="#lip" x="440.9" y="422.8"/>
<use href="#lip" transform="translate(440.9 490.4) scale(-1 -1)"/>
<use href="#lip" x="459.7" y="422.8"/>
<use href="#lip" transform="translate(459.7 490.4) scale(-1 -1)"/>
<use href="#lip" x="478.5" y="422.8"/>
<use href="#lip" transform="translate(478.5 490.4) scale(-1 -1)"/>
<use href="#lip" x="497.4" y="422.8"/>
<use href="#lip" transform="translate(497.4 490.4) scale(-1 -1)"/>
<use href="#lip" x="516.2" y="422.8"/>
<use href="#lip" transform="translate(516.2 490.4) scale(-1 -1)"/>
<use href="#lip" x="535.0" y="422.8"/>
<use href="#lip" transform="translate(535.0 490.4) scale(-1 -1)"/>
<use href="#lip" x="553.9" y="422.8"/>
<use href="#lip" transform="translate(553.9 490.4) scale(-1 -1)"/>
<use href="#lip" x="572.7" y="422.8"/>
<use href="#lip" transform="translate(572.7 490.4) scale(-1 -1)"/>
<use href="#lip" x="591.5" y="422.8"/>
<use href="#lip" transform="translate(591.5 490.4) scale(-1 -1)"/>
<use href="#lip" x="610.3" y="422.8"/>
<use href="#lip" transform="translate(610.3 490.4) scale(-1 -1)"/>
<use href="#lip" x="629.2" y="422.8"/>
<use href="#lip" transform="translate(629.2 490.4) scale(-1 -1)"/>
<use href="#lip" x="648.0" y="422.8"/>
<use href="#lip" transform="translate(648.0 490.4) scale(-1 -1)"/>
<use href="#lip" x="666.8" y="422.8"/>
<use href="#lip" transform="translate(666.8 490.4) scale(-1 -1)"/>
<use href="#lip" x="685.7" y="422.8"/>
<use href="#lip" transform="translate(685.7 490.4) scale(-1 -1)"/>
<use href="#lip" x="704.5" y="422.8"/>
<use href="#lip" transform="translate(704.5 490.4) scale(-1 -1)"/>
<use href="#lip" x="723.3" y="422.8"/>
<use href="#lip" transform="translate(723.3 490.4) scale(-1 -1)"/>
<use href="#lip" x="742.2" y="422.8"/>
<use href="#lip" transform="translate(742.2 490.4) scale(-1 -1)"/>
<use href="#lip" x="761.0" y="422.8"/>
<use href="#lip" transform="translate(761.0 490.4) scale(-1 -1)"/>
<use href="#lip" x="779.8" y="422.8"/>
<use href="#lip" transform="translate(779.8 490.4) scale(-1 -1)"/>
<use href="#lip" x="798.6" y="422.8"/>
<use href="#lip" transform="translate(798.6 490.4) scale(-1 -1)"/>
<use href="#lip" x="817.5" y="422.8"/>
<use href="#lip" transform="translate(817.5 490.4) scale(-1 -1)"/>
<rect x="186.5" y="390.5" width="40.5" height="128.5" fill="none" stroke="#f9d5a6" stroke-width="1"/>
<rect x="187" y="392.5" width="39" height="125" rx="12.5" ry="13" fill="url(#grn)" stroke="#4fa145" stroke-width="2"/><path d="M203 400.5 C213 396.5 220 401.5 221 412.5 L222 452.5 C218 437.5 217 424.5 213 419.5 C208 416.5 202 409.5 203 400.5Z" fill="#a9dc9c" opacity=".75"/><path d="M192 422.5 C191 462.5 192 492.5 196 508.5 C201 514.5 215 514.5 220 508.5" fill="none" stroke="#7fc270" stroke-width="2" opacity=".7"/>
<rect x="227.5" y="402.5" width="14.5" height="105" rx="7" ry="8" fill="#d4d961" stroke="#bcc340" stroke-width="1.6"/><path d="M231.5 414.5 V493.5" stroke="#c6cc4c" stroke-width="2.5" opacity=".7" stroke-linecap="round"/>
<path d="M276 369.5 H255.5 V420" fill="none" stroke="#3c3c3c" stroke-width="1.4"/>
<path d="M187 507.5 L164.5 517.5 V531.5" fill="none" stroke="#3c3c3c" stroke-width="1.4"/>
<path d="M239.6 370.5 C247 372 253 385 257 421" fill="none" stroke="#5b6a87" stroke-width="2.6" stroke-linecap="round"/>
<path d="M253 490 C253 505 256 519 268 522 C277 524 284 521 290 514" fill="none" stroke="#5b6a87" stroke-width="2.6"/>
<path d="M305 450 C307 436 309 425 314 416 C322 403 345 401 356 412 C368 424 368 445 361 458 C357 466 351 470 347 478" fill="none" stroke="#5b6a87" stroke-width="2.6"/>
<path d="M346 549 C346 565 349 580 358 593" fill="none" stroke="#5b6a87" stroke-width="2.6"/>
<path d="M406 638 C425 640 445 652 455.6 670" fill="none" stroke="#5b6a87" stroke-width="2.6" stroke-linecap="round"/>
<g transform="translate(253.2 455.5) rotate(0)"><rect x="-9.75" y="-36.0" width="19.5" height="72" rx="9.75" ry="9.75" fill="url(#blu)" stroke="#1c6bb2" stroke-width="1.8"/><path d="M4.75 -29.0 C6.25 -24.0 6.25 -16.0 6.25 -8.0" fill="none" stroke="#7db7e6" stroke-width="1.6" stroke-linecap="round" opacity=".9"/><path d="M-6.75 28.0 C-4.75 32.0 -1.75 33.0 2.25 32.5" fill="none" stroke="#2b77bd" stroke-width="2" stroke-linecap="round" opacity=".6"/><path d="M-7.25 -18.5 H7.25" stroke="#86bce8" stroke-width="1.7" opacity=".95"/><path d="M-7.25 -6.3 H7.25" stroke="#86bce8" stroke-width="1.7" opacity=".95"/><path d="M-7.25 6 H7.25" stroke="#86bce8" stroke-width="1.7" opacity=".95"/><path d="M-7.25 19.3 H7.25" stroke="#86bce8" stroke-width="1.7" opacity=".95"/></g>
<g transform="translate(297.3 481.5) rotate(16.5)"><rect x="-10.0" y="-36.0" width="20" height="72" rx="10.0" ry="10.0" fill="url(#blu)" stroke="#1c6bb2" stroke-width="1.8"/><path d="M5.0 -29.0 C6.5 -24.0 6.5 -16.0 6.5 -8.0" fill="none" stroke="#7db7e6" stroke-width="1.6" stroke-linecap="round" opacity=".9"/><path d="M-7.0 28.0 C-5.0 32.0 -2.0 33.0 2.0 32.5" fill="none" stroke="#2b77bd" stroke-width="2" stroke-linecap="round" opacity=".6"/></g>
<g transform="translate(346.3 513.5) rotate(0)"><rect x="-10.5" y="-37.0" width="21" height="74" rx="10.5" ry="10.5" fill="url(#blu)" stroke="#1c6bb2" stroke-width="1.8"/><path d="M5.5 -30.0 C7.0 -25.0 7.0 -17.0 7.0 -9.0" fill="none" stroke="#7db7e6" stroke-width="1.6" stroke-linecap="round" opacity=".9"/><path d="M-7.5 29.0 C-5.5 33.0 -2.5 34.0 1.5 33.5" fill="none" stroke="#2b77bd" stroke-width="2" stroke-linecap="round" opacity=".6"/></g>
<g transform="translate(385.2 617.2) rotate(-49.8)"><rect x="-10.0" y="-35.0" width="20" height="70" rx="10.0" ry="10.0" fill="url(#blu)" stroke="#1c6bb2" stroke-width="1.8"/><path d="M5.0 -28.0 C6.5 -23.0 6.5 -15.0 6.5 -7.0" fill="none" stroke="#7db7e6" stroke-width="1.6" stroke-linecap="round" opacity=".9"/><path d="M-7.0 27.0 C-5.0 31.0 -2.0 32.0 2.0 31.5" fill="none" stroke="#2b77bd" stroke-width="2" stroke-linecap="round" opacity=".6"/></g>
<rect x="490.5" y="395" width="21" height="121.5" fill="none" stroke="#f9d5a6" stroke-width="1"/>
<path d="M487 372 C496 373 501 392 504.5 421" fill="none" stroke="#5b6a87" stroke-width="3" stroke-linecap="round"/>
<path d="M502.6 492 C497 506 494.5 524 497 543 C499 560 508 570 521 572.5" fill="none" stroke="#5b6a87" stroke-width="3" stroke-dasharray="6.5 5"/>
<g transform="translate(506.5 456.5) rotate(0)"><rect x="-10.0" y="-36.0" width="20" height="72" rx="10.0" ry="10.0" fill="url(#blu)" stroke="#1c6bb2" stroke-width="1.8"/><path d="M5.0 -29.0 C6.5 -24.0 6.5 -16.0 6.5 -8.0" fill="none" stroke="#7db7e6" stroke-width="1.6" stroke-linecap="round" opacity=".9"/><path d="M-7.0 28.0 C-5.0 32.0 -2.0 33.0 2.0 32.5" fill="none" stroke="#2b77bd" stroke-width="2" stroke-linecap="round" opacity=".6"/><path d="M-7.5 -18.5 H7.5" stroke="#86bce8" stroke-width="1.7" opacity=".95"/><path d="M-7.5 -6.3 H7.5" stroke="#86bce8" stroke-width="1.7" opacity=".95"/><path d="M-7.5 6 H7.5" stroke="#86bce8" stroke-width="1.7" opacity=".95"/><path d="M-7.5 19.3 H7.5" stroke="#86bce8" stroke-width="1.7" opacity=".95"/></g>
<rect x="528" y="464.2" width="128" height="3.2" fill="url(#arg)"/>
<path d="M668.4 465.8 L653 460 L656 465.8 L653 471.6Z" fill="#3a4866"/>
<rect x="683.5" y="390.5" width="40.5" height="129" fill="none" stroke="#f9d5a6" stroke-width="1"/>
<rect x="724" y="400.5" width="17" height="107" fill="none" stroke="#f9d5a6" stroke-width="1"/>
<rect x="679" y="391" width="38.5" height="126" rx="12.5" ry="13" fill="url(#grn)" stroke="#4fa145" stroke-width="2"/><path d="M695 399 C705 395 712 400 713 411 L714 451 C710 436 709 423 705 418 C700 415 694 408 695 399Z" fill="#a9dc9c" opacity=".75"/><path d="M684 421 C683 461 684 491 688 507 C693 513 707 513 712 507" fill="none" stroke="#7fc270" stroke-width="2" opacity=".7"/>
<rect x="718.5" y="401" width="14.5" height="105" rx="7" ry="8" fill="#d4d961" stroke="#bcc340" stroke-width="1.6"/><path d="M722.5 413 V492" stroke="#c6cc4c" stroke-width="2.5" opacity=".7" stroke-linecap="round"/>
<rect x="576.5" y="198.8" width="101.2" height="115.8" fill="none" stroke="#f8cf9c" stroke-width="1.2"/>
<path d="M620 226 L660 240 L636 292 L592 280 Z" fill="#7b62b5"/>
<circle cx="659.5" cy="244" r="6.5" fill="#7b62b5" stroke="#674ea4" stroke-width="1"/>
<circle cx="619" cy="230.2" r="6.5" fill="#8973bf" stroke="#745eaf" stroke-width="1"/>
<circle cx="621.2" cy="238.6" r="6.5" fill="#7b62b5" stroke="#674ea4" stroke-width="1"/>
<circle cx="652.3" cy="249.4" r="6.5" fill="#7b62b5" stroke="#674ea4" stroke-width="1"/>
<circle cx="629.7" cy="246" r="6.5" fill="#7b62b5" stroke="#674ea4" stroke-width="1"/>
<circle cx="641.5" cy="250.5" r="6.5" fill="#7b62b5" stroke="#674ea4" stroke-width="1"/>
<circle cx="653.5" cy="254.5" r="6.5" fill="#8973bf" stroke="#745eaf" stroke-width="1"/>
<circle cx="612.2" cy="240.9" r="6.5" fill="#9989ca" stroke="#8573bb" stroke-width="1"/>
<circle cx="615" cy="248.8" r="6.5" fill="#8973bf" stroke="#745eaf" stroke-width="1"/>
<circle cx="646.6" cy="259.5" r="6.5" fill="#8973bf" stroke="#745eaf" stroke-width="1"/>
<circle cx="623.5" cy="256.7" r="6.5" fill="#8973bf" stroke="#745eaf" stroke-width="1"/>
<circle cx="635.9" cy="260.1" r="6.5" fill="#8973bf" stroke="#745eaf" stroke-width="1"/>
<circle cx="647" cy="264.5" r="6.5" fill="#9989ca" stroke="#8573bb" stroke-width="1"/>
<circle cx="605.4" cy="250.5" r="6.5" fill="#a898d3" stroke="#9382c5" stroke-width="1"/>
<circle cx="608.2" cy="259" r="6.5" fill="#9989ca" stroke="#8573bb" stroke-width="1"/>
<circle cx="640.4" cy="269.7" r="6.5" fill="#9989ca" stroke="#8573bb" stroke-width="1"/>
<circle cx="616.7" cy="267.4" r="6.5" fill="#9989ca" stroke="#8573bb" stroke-width="1"/>
<circle cx="629.1" cy="271.9" r="6.5" fill="#9989ca" stroke="#8573bb" stroke-width="1"/>
<circle cx="640.5" cy="274.5" r="6.5" fill="#7b62b5" stroke="#674ea4" stroke-width="1"/>
<circle cx="598.1" cy="260.7" r="6.5" fill="#8973bf" stroke="#745eaf" stroke-width="1"/>
<circle cx="601.5" cy="269.1" r="6.5" fill="#7b62b5" stroke="#674ea4" stroke-width="1"/>
<circle cx="634.2" cy="279.8" r="6.5" fill="#7b62b5" stroke="#674ea4" stroke-width="1"/>
<circle cx="610" cy="278.2" r="6.5" fill="#7b62b5" stroke="#674ea4" stroke-width="1"/>
<circle cx="622.9" cy="282.1" r="6.5" fill="#7b62b5" stroke="#674ea4" stroke-width="1"/>
<circle cx="635" cy="284" r="6.5" fill="#5d41a0" stroke="#3e2a7c" stroke-width="1"/>
<circle cx="593.6" cy="270.8" r="6.5" fill="#694eaa" stroke="#4b358e" stroke-width="1"/>
<circle cx="596.9" cy="278.7" r="6.5" fill="#5d41a0" stroke="#3e2a7c" stroke-width="1"/>
<circle cx="629.7" cy="288.9" r="6.5" fill="#5d41a0" stroke="#3e2a7c" stroke-width="1"/>
<circle cx="606.5" cy="286.6" r="6.5" fill="#5d41a0" stroke="#3e2a7c" stroke-width="1"/>
<circle cx="619" cy="291.1" r="6.5" fill="#5d41a0" stroke="#3e2a7c" stroke-width="1"/>
<circle cx="597.5" cy="292.3" r="6.5" fill="#9989ca" stroke="#8573bb" stroke-width="1"/>
<circle cx="608.8" cy="295.7" r="6.5" fill="#9989ca" stroke="#8573bb" stroke-width="1"/>
<circle cx="586.8" cy="291.1" r="6.5" fill="#5d41a0" stroke="#3e2a7c" stroke-width="1"/>
<circle cx="591.3" cy="300.2" r="6.5" fill="#5d41a0" stroke="#3e2a7c" stroke-width="1"/>
<circle cx="602.6" cy="304.6" r="6.5" fill="#5d41a0" stroke="#3e2a7c" stroke-width="1"/>
<circle cx="616.1" cy="303.8" r="6.5" fill="#5d41a0" stroke="#3e2a7c" stroke-width="1"/>
<circle cx="625.2" cy="298.6" r="6.5" fill="#5d41a0" stroke="#3e2a7c" stroke-width="1"/>
<circle cx="641.7" cy="212" r="6.5" fill="#9989ca" stroke="#8573bb" stroke-width="1"/>
<circle cx="655.6" cy="212.8" r="6.5" fill="#9989ca" stroke="#8573bb" stroke-width="1"/>
<circle cx="631.1" cy="210.4" r="6.5" fill="#5d41a0" stroke="#3e2a7c" stroke-width="1"/>
<circle cx="642.6" cy="207.1" r="6.5" fill="#5d41a0" stroke="#3e2a7c" stroke-width="1"/>
<circle cx="657.2" cy="207.9" r="6.5" fill="#5d41a0" stroke="#3e2a7c" stroke-width="1"/>
<circle cx="667.8" cy="216.1" r="6.5" fill="#5d41a0" stroke="#3e2a7c" stroke-width="1"/>
<circle cx="664" cy="211" r="6.5" fill="#5d41a0" stroke="#3e2a7c" stroke-width="1"/>
<circle cx="626.3" cy="220.2" r="6.5" fill="#5d41a0" stroke="#3e2a7c" stroke-width="1"/>
<circle cx="636" cy="219.3" r="6.5" fill="#5d41a0" stroke="#3e2a7c" stroke-width="1"/>
<circle cx="648.3" cy="222.6" r="6.5" fill="#5d41a0" stroke="#3e2a7c" stroke-width="1"/>
<circle cx="662.1" cy="222.6" r="6.5" fill="#5d41a0" stroke="#3e2a7c" stroke-width="1"/>
<circle cx="627.1" cy="228.3" r="6.5" fill="#5d41a0" stroke="#3e2a7c" stroke-width="1"/>
<circle cx="641.7" cy="229.1" r="6.5" fill="#5d41a0" stroke="#3e2a7c" stroke-width="1"/>
<circle cx="654.8" cy="230" r="6.5" fill="#5d41a0" stroke="#3e2a7c" stroke-width="1"/>
<circle cx="662" cy="230.5" r="6.5" fill="#5d41a0" stroke="#3e2a7c" stroke-width="1"/>
<circle cx="635.9" cy="235.2" r="6.5" fill="#5d41a0" stroke="#3e2a7c" stroke-width="1"/>
<circle cx="648.3" cy="240.3" r="6.5" fill="#5d41a0" stroke="#3e2a7c" stroke-width="1"/>
<circle cx="657.9" cy="236.4" r="6.5" fill="#5d41a0" stroke="#3e2a7c" stroke-width="1"/>
<path d="M671.5 258.8 H800" stroke="#596277" stroke-width="3.2" fill="none"/>
<path d="M810 258.8 L797 253 L800 258.8 L797 264.6Z" fill="#596277"/>
<path d="M486.2 352 C487 300 520 260 574 258.2" fill="none" stroke="#55677a" stroke-width="3.2" stroke-dasharray="6 4.6"/>
<path d="M583 258 L568.5 252.4 L572.5 258 L568.5 263.8Z" fill="#55677a"/>
<path d="M486.2 352 C487 300 520 260 583 258" fill="none" stroke="#7fe27f" stroke-width="1"/>
<rect x="486" y="258.2" width="97.2" height="96.4" fill="none" stroke="#86e386" stroke-width="1"/>
<rect x="483.6" y="255.79999999999998" width="4.8" height="4.8" fill="#fff" stroke="#86e386" stroke-width="1"/>
<rect x="483.6" y="304.0" width="4.8" height="4.8" fill="#fff" stroke="#86e386" stroke-width="1"/>
<rect x="483.6" y="352.20000000000005" width="4.8" height="4.8" fill="#fff" stroke="#86e386" stroke-width="1"/>
<rect x="532.2" y="255.79999999999998" width="4.8" height="4.8" fill="#fff" stroke="#86e386" stroke-width="1"/>
<rect x="532.2" y="352.20000000000005" width="4.8" height="4.8" fill="#fff" stroke="#86e386" stroke-width="1"/>
<rect x="580.8000000000001" y="255.79999999999998" width="4.8" height="4.8" fill="#fff" stroke="#86e386" stroke-width="1"/>
<rect x="580.8000000000001" y="304.0" width="4.8" height="4.8" fill="#fff" stroke="#86e386" stroke-width="1"/>
<rect x="580.8000000000001" y="352.20000000000005" width="4.8" height="4.8" fill="#fff" stroke="#86e386" stroke-width="1"/>
</svg>
<!-- stroke panel -->
<div class="a" style="left:806px;top:87px;width:217px;height:326.5px;background:#f0f0f0;box-shadow:-1px 0 2px rgba(0,0,0,.35),0 1px 2px rgba(0,0,0,.3);border-top:1px solid #a4a4a4;box-sizing:border-box"></div>
<div class="a" style="left:807px;top:88px;width:215px;height:25.5px;background:#dcdcdc"></div>
<div class="a" style="left:840px;top:88px;width:45px;height:26px;background:#f0f0f0"></div>
<div class="a" style="left:918px;top:88px;width:1px;height:25.5px;background:#cdcdcd"></div>
<div class="a" style="left:962.5px;top:88px;width:1px;height:25.5px;background:#cdcdcd"></div>
<div class="t sans" style="left:815.5px;top:95px;font-size:11px;color:#5a5a5a">颜色</div>
<div class="t sans" style="left:854px;top:95px;font-size:11px;color:#333">描边</div>
<div class="t sans" style="left:893.5px;top:95px;font-size:11px;color:#5a5a5a">渐变</div>
<div class="t sans" style="left:926.5px;top:95px;font-size:11px;color:#5a5a5a">透明度</div>
<!-- rows -->
<div class="t serif" style="left:834px;top:124px;font-size:11px;color:#3a3a3a;letter-spacing:1px">粗细:</div>
<div class="box" style="left:868px;top:120px;width:82px;height:19px;border-radius:2px;border:1px solid #e4e4e4"></div>
<div class="a" style="left:869px;top:121px;width:16px;height:17px;background:#f8f8f8;border-right:1px solid #ececec;box-sizing:border-box"></div>
<div class="a" style="left:931.5px;top:121px;width:17.5px;height:17px;background:#f8f8f8;border-left:1px solid #ececec;box-sizing:border-box"></div>
<div class="t serif" style="left:888px;top:123.5px;font-size:11px;color:#5a5a5a;letter-spacing:.7px;word-spacing:1.5px">3 pt</div>
<div class="t serif" style="left:834px;top:149.5px;font-size:11px;color:#3a3a3a;letter-spacing:1px">端点:</div>
<div class="a" style="left:868px;top:144.4px;width:63.5px;height:19.6px;background:#f7f7f7;border:1px solid #e6e6e6;border-radius:2px;box-sizing:border-box"></div>
<div class="a" style="left:889px;top:145.5px;width:1px;height:18px;background:#e6e6e6"></div>
<div class="a" style="left:911.2px;top:144.6px;width:19.8px;height:19.2px;background:#b6b6b6"></div>
<div class="t serif" style="left:834px;top:175px;font-size:11px;color:#3a3a3a;letter-spacing:1px">边角:</div>
<div class="a" style="left:868px;top:170px;width:63.5px;height:19.5px;background:#f7f7f7;border:1px solid #e6e6e6;border-radius:2px;box-sizing:border-box"></div>
<div class="a" style="left:868.2px;top:170px;width:20px;height:19.4px;background:#b6b6b6"></div>
<div class="a" style="left:910px;top:171.5px;width:1px;height:18px;background:#e6e6e6"></div>
<div class="t serif" style="left:940px;top:175px;font-size:11px;color:#3a3a3a;letter-spacing:1px">限制:</div>
<div class="box" style="left:973.5px;top:170.5px;width:36px;height:18.5px;border-radius:2px;border:1px solid #e4e4e4"></div>
<div class="t serif" style="left:978px;top:173.5px;font-size:11px;color:#555;letter-spacing:-.4px">10</div>
<div class="t serif" style="left:1013px;top:175px;font-size:11px;color:#444">x</div>
<div class="t serif" style="left:811.5px;top:200px;font-size:11px;color:#3a3a3a;letter-spacing:.95px">对齐描边:</div>
<div class="a" style="left:868px;top:195.4px;width:63.5px;height:19.8px;background:#f7f7f7;border:1px solid #e6e6e6;border-radius:2px;box-sizing:border-box"></div>
<div class="a" style="left:868.2px;top:195.4px;width:20px;height:19.8px;background:#b6b6b6"></div>
<div class="a" style="left:910px;top:197px;width:1px;height:18px;background:#e6e6e6"></div>
<div class="a" style="left:810.5px;top:221.5px;width:208px;height:1px;background:#dadada"></div>
<!-- dashed -->
<div class="a" style="left:812px;top:232px;width:11px;height:11px;background:#4a4a4a;border-radius:1.5px"></div>
<div class="t serif" style="left:829px;top:232.5px;font-size:11px;letter-spacing:.6px;color:#3a3a3a">虚线</div>
<div class="a" style="left:946px;top:227.5px;width:72px;height:20px;background:#f7f7f7;border:1px solid #e6e6e6;border-radius:2px;box-sizing:border-box"></div>
<div class="a" style="left:946px;top:227.5px;width:35.5px;height:20px;background:#b6b6b6"></div>
<div class="box" style="left:811.8px;top:253px;width:30.6px;height:19.5px;border-radius:2px;border:1px solid #e4e4e4"></div>
<div class="t serif" style="left:815.0px;top:256px;font-size:11px;color:#5a5a5a;letter-spacing:.7px;word-spacing:1.5px">6 pt</div>
<div class="t serif" style="left:816.1999999999999px;top:273.5px;font-size:11px;color:#4a4a4a">虚线</div>
<div class="box" style="left:846.4px;top:253px;width:30.6px;height:19.5px;border-radius:2px;border:1px solid #e4e4e4"></div>
<div class="t serif" style="left:849.6px;top:256px;font-size:11px;color:#5a5a5a;letter-spacing:.7px;word-spacing:1.5px">8 pt</div>
<div class="t serif" style="left:850.8px;top:273.5px;font-size:11px;color:#4a4a4a">间隙</div>
<div class="box" style="left:881.4px;top:253px;width:30.6px;height:19.5px;border-radius:2px;border:1px solid #e4e4e4"></div>
<div class="t serif" style="left:884.6px;top:256px;font-size:11px;color:#5a5a5a;letter-spacing:.7px;word-spacing:1.5px">0 pt</div>
<div class="t serif" style="left:885.8px;top:273.5px;font-size:11px;color:#4a4a4a">虚线</div>
<div class="box" style="left:916.2px;top:253px;width:30.6px;height:19.5px;border-radius:2px;border:1px solid #e4e4e4"></div>
<div class="t serif" style="left:919.4000000000001px;top:256px;font-size:11px;color:#5a5a5a;letter-spacing:.7px;word-spacing:1.5px">0 pt</div>
<div class="t serif" style="left:920.6px;top:273.5px;font-size:11px;color:#4a4a4a">间隙</div>
<div class="box" style="left:951px;top:253px;width:30.6px;height:19.5px;border-radius:2px;border:1px solid #e4e4e4"></div>
<div class="t serif" style="left:954.2px;top:256px;font-size:11px;color:#5a5a5a;letter-spacing:.7px;word-spacing:1.5px">0 pt</div>
<div class="t serif" style="left:955.4px;top:273.5px;font-size:11px;color:#4a4a4a">虚线</div>
<div class="box" style="left:985.7px;top:253px;width:30.6px;height:19.5px;border-radius:2px;border:1px solid #e4e4e4"></div>
<div class="t serif" style="left:988.9000000000001px;top:256px;font-size:11px;color:#5a5a5a;letter-spacing:.7px;word-spacing:1.5px">0 pt</div>
<div class="t serif" style="left:990.1px;top:273.5px;font-size:11px;color:#4a4a4a">间隙</div>
<div class="a" style="left:810.5px;top:292px;width:208px;height:1px;background:#dadada"></div>
<div class="t serif" style="left:834px;top:303px;font-size:11px;color:#3a3a3a;letter-spacing:1px">箭头:</div>
<div class="box" style="left:868px;top:299px;width:53px;height:19px;border-radius:2px;border:1px solid #e4e4e4"></div>
<div class="a" style="left:903px;top:300px;width:17px;height:17px;background:#f8f8f8;border-left:1px solid #ececec;box-sizing:border-box"></div>
<div class="box" style="left:926.5px;top:299px;width:54px;height:19px;border-radius:2px;border:1px solid #e4e4e4"></div>
<div class="a" style="left:963px;top:300px;width:16.5px;height:17px;background:#f8f8f8;border-left:1px solid #ececec;box-sizing:border-box"></div>
<div class="a" style="left:981px;top:380.5px;width:37.5px;height:1px;background:#dadada"></div>
<div class="t serif" style="left:811.5px;top:391.5px;font-size:11px;color:#3a3a3a">配</div>
<svg style="left:0;top:0" width="1080" height="797" viewBox="0 0 1080 797">
<g fill="none" stroke="#3a3a3a" stroke-width="1.3">
<path d="M845 98.6 l1.8-2 1.8 2 M845 102 l1.8 2 1.8-2" stroke-width="1" stroke="#4a4a4a"/>
<path d="M985.4 97.6 l3 3-3 3 M990 97.6 l3 3-3 3" stroke-width="1.3"/>
<path d="M1000.8 95 V106.6" stroke="#8a8a8a" stroke-width="1"/>
<path d="M1008.4 97.6 H1017.6 M1008.4 100.8 H1017.6 M1008.4 104 H1017.6" stroke="#7a7a7a" stroke-width="1"/>
<path d="M873 126.6 l3.4-3.4 3.4 3.4 M873 132.6 l3.4 3.4 3.4-3.4" stroke-width="1.2"/>
<path d="M937.4 128 l3 3 3-3 M908.6 307 l3 3 3-3 M968.2 307 l3 3 3-3"/>
<path d="M814.2 237.6 l2.6 2.6 4.4-5.4" stroke="#fff" stroke-width="1.6"/>
</g>
<g fill="#3a3a3a">
<!-- cap icons -->
<rect x="876.2" y="149" width="7" height="11.8"/><path d="M875 154.9 H883.2" stroke="#f7f7f7" stroke-width="1.1"/><rect x="874.2" y="153.6" width="2.6" height="2.6" fill="#f7f7f7" stroke="#3a3a3a" stroke-width=".7"/>
<path d="M900 149 h5.4 v11.8 h-5.4 a5.9 5.9 0 0 1 0 -11.8z"/><path d="M898.8 154.9 H905.4" stroke="#f7f7f7" stroke-width="1.1"/><circle cx="898.8" cy="154.9" r="1" fill="#f7f7f7"/>
<rect x="915.4" y="149" width="11.4" height="11.8" fill="#262626"/><path d="M920.4 154.9 H926.8" stroke="#d8d8d8" stroke-width="1.1"/><circle cx="920.4" cy="154.9" r="1" fill="#d8d8d8"/>
<!-- join icons -->
<rect x="872.2" y="174.4" width="10.9" height="11.1" fill="#222"/><path d="M883.1 179.4 H877.2 V185.5" fill="none" stroke="#c8c8c8" stroke-width="1"/><rect x="881.6" y="183.6" width="1.6" height="2" fill="#b6b6b6"/>
<path d="M899.6 174.4 h5.6 v11.1 h-11.1 v-5.6 a5.5 5.5 0 0 1 5.5 -5.5z"/><path d="M905.2 179.4 H899.2 V185.5" fill="none" stroke="#f7f7f7" stroke-width="1"/><rect x="903.7" y="183.6" width="1.6" height="2" fill="#f7f7f7"/>
<path d="M920.9 174.4 h5.9 v11.1 h-11.4 v-5.6z"/><path d="M926.8 179.4 H920.6 V185.5" fill="none" stroke="#f7f7f7" stroke-width="1"/><rect x="925.3" y="183.6" width="1.6" height="2" fill="#f7f7f7"/>
<!-- align stroke icons -->
<path d="M872.2 199.8 h6.8 v5.4 h4.1 v5.6 h-10.9z" fill="#222"/><path d="M875.3 199.8 V208.2 H883.1" stroke="#d0d0d0" stroke-width="1" fill="none"/>
<path d="M896.4 199.8 h4.6 v5.4 h4.6 v4.6 h-9.2z" fill="#cfcfcf"/><path d="M894.6 199.8 v11 h10.8" stroke="#c4c4c4" stroke-width=".8" fill="none"/>
<path d="M915.4 199.8 h5.6 v5.6 h5.6 v5.4 h-11.2z" fill="#cfcfcf"/><path d="M921 199.8 v5.6 h5.6" stroke="#e4e4e4" stroke-width=".9" fill="none"/>
</g>
<!-- dash align icons -->
<g fill="none" stroke="#1e1e1e" stroke-width="1.5">
<path d="M951.6 232.6 H957 M961 232.6 H968 M972 232.6 H976.6 M951.6 241.6 H957 M961 241.6 H968 M972 241.6 H976.6 M952 240 v2 M976.2 232 v3"/>
<path d="M987.6 236 v-3.4 h3.6 M995.6 232.6 h5.6 M1005.4 232.6 h4 v3.4 M987.6 238.6 v3.4 h3.6 M995.6 242 h5.6 M1005.4 242 h4 v-3.4" stroke="#3a3a3a"/>
</g>
<!-- arrowheads row -->
<path d="M872.4 308.4 H897.6" stroke="#111" stroke-width="1.8"/>
<path d="M930.6 308.4 H953" stroke="#111" stroke-width="1"/><path d="M959.4 308.4 L950.4 304.4 L952.4 308.4 L950.4 312.4Z" fill="#111"/>
<!-- swap icon -->
<g fill="#3a3a3a"><path d="M1001.4 305 H1009 V303 L1013.4 305.8 L1009 308.6 V306.6 H1001.4Z M1013 311 H1005.4 V309 L1001 311.8 L1005.4 314.6 V312.6 H1013Z"/></g>
<!-- unlink icon -->
<g fill="none" stroke="#3a3a3a"><rect x="1003.6" y="331" width="6.6" height="13.4" rx="3.3" stroke-width="1.5"/><path d="M1000.6 331.6 L1012.6 343.6" stroke="#f0f0f0" stroke-width="3.4"/><path d="M1000.2 330.6 L1013 344.2" stroke-width="1.2"/></g>
<!-- flip icons (disabled) -->
<g fill="#cfcfcf"><path d="M990.6 392.6 v9 l-5 -4.5z M983.6 392 v10" stroke="#d4d4d4" stroke-width=".8" stroke-dasharray="1 1"/><path d="M1002.6 391 h8 l-4 4.6z"/><path d="M1002.6 403.4 h8 l-4 -4.6z" fill="none" stroke="#cfcfcf" stroke-width=".9"/><path d="M1001 397.2 h11" stroke="#d4d4d4" stroke-width=".8" stroke-dasharray="1 1"/></g>
</svg>

<!-- arrowhead dropdown -->
<div class="a" style="left:819.5px;top:319px;width:162px;height:275px;background:#f0f0f0;border:1px solid #d8d8d8;box-sizing:border-box;box-shadow:1.5px 2.5px 1.5px rgba(0,0,0,.42)"></div>
<div class="a" style="left:825px;top:324.5px;width:148px;height:261.5px;background:#fff;border:1px solid #e2e2e2;box-sizing:border-box"></div>
<div class="a" style="left:963px;top:325.5px;width:9.5px;height:259.5px;background:#fafafa"></div>
<div class="a" style="left:963.6px;top:341.5px;width:9px;height:54px;background:#dcdcdc;border-radius:4.5px"></div>
<div class="a" style="left:826px;top:353.1px;width:137px;height:1px;background:#e6e6e6"></div>
<div class="a" style="left:826px;top:382.1px;width:137px;height:1px;background:#e6e6e6"></div>
<div class="a" style="left:826px;top:411.5px;width:137px;height:1px;background:#e6e6e6"></div>
<div class="a" style="left:826px;top:440.5px;width:137px;height:1px;background:#e6e6e6"></div>
<div class="a" style="left:826px;top:469.7px;width:137px;height:1px;background:#e6e6e6"></div>
<div class="a" style="left:826px;top:498.4px;width:137px;height:1px;background:#e6e6e6"></div>
<div class="a" style="left:826px;top:527.7px;width:137px;height:1px;background:#e6e6e6"></div>
<div class="a" style="left:826px;top:556.8px;width:137px;height:1px;background:#e6e6e6"></div>
<div class="a" style="left:827px;top:443.4px;width:134px;height:24.2px;border:1px solid #6a6a6a;box-sizing:border-box"></div>
<div class="t serif" style="left:890px;top:334.7px;font-size:11px;letter-spacing:.9px;color:#333">箭头<span style="margin-left:5.2px">1</span></div>
<div class="t serif" style="left:890px;top:364.0px;font-size:11px;letter-spacing:.9px;color:#333">箭头<span style="margin-left:5.2px">2</span></div>
<div class="t serif" style="left:890px;top:393.2px;font-size:11px;letter-spacing:.9px;color:#333">箭头<span style="margin-left:5.2px">3</span></div>
<div class="t serif" style="left:890px;top:422.3px;font-size:11px;letter-spacing:.9px;color:#333">箭头<span style="margin-left:5.2px">4</span></div>
<div class="t serif" style="left:890px;top:451.2px;font-size:11px;letter-spacing:.9px;color:#333">箭头<span style="margin-left:5.2px">5</span></div>
<div class="t serif" style="left:890px;top:480.7px;font-size:11px;letter-spacing:.9px;color:#333">箭头<span style="margin-left:5.2px">6</span></div>
<div class="t serif" style="left:890px;top:509.8px;font-size:11px;letter-spacing:.9px;color:#333">箭头<span style="margin-left:5.2px">7</span></div>
<div class="t serif" style="left:890px;top:539.1px;font-size:11px;letter-spacing:.9px;color:#333">箭头<span style="margin-left:5.2px">8</span></div>
<div class="t serif" style="left:890px;top:568.0px;font-size:11px;letter-spacing:.9px;color:#333">箭头<span style="margin-left:5.2px">9</span></div>
<svg style="left:0;top:0" width="1080" height="797" viewBox="0 0 1080 797">
<g fill="#050505" stroke="none">
<path d="M831 339.9 H870.5" stroke="#050505" stroke-width="1.9" fill="none"/>
<path d="M880.4 339.9 L865.7 331.8 L869.5 339.9 L865.7 348.0Z"/>
<path d="M831 369.2 H870.5" stroke="#050505" stroke-width="1.9" fill="none"/>
<path d="M880.2 369.2 L863.8 361.9 L869.5 369.2 L863.8 376.5Z"/>
<path d="M831 398.4 H870" stroke="#050505" stroke-width="1.9" fill="none"/>
<path d="M880.8 398.4 L861 392.0 L869 398.4 L861 404.8Z"/>
<path d="M831 427.5 H877.9" stroke="#050505" stroke-width="1.9" fill="none"/>
<path d="M870.8 420.1 L879.4 427.5 L870.8 434.9" fill="none" stroke="#050505" stroke-width="2"/>
<path d="M831 456.4 H868" stroke="#050505" stroke-width="1.9" fill="none"/>
<path d="M880.8 456.4 L865.7 450.0 L867 456.4 L865.7 462.8Z"/>
<path d="M831 485.9 H874.1" stroke="#050505" stroke-width="1.9" fill="none"/>
<path d="M880.5 485.9 L873.1 475.1 L873.1 496.7Z"/>
<path d="M831 515.0 H866.3" stroke="#050505" stroke-width="1.9" fill="none"/>
<path d="M880.2 515.0 L865.3 506.6 L865.3 523.4Z"/>
<path d="M831 544.3 H871.2" stroke="#050505" stroke-width="1.9" fill="none"/>
<path d="M880.2 544.3 L870.2 533.9 L870.2 554.7Z"/>
<path d="M831 573.2 H862.5" stroke="#050505" stroke-width="1.9" fill="none"/>
<path d="M880.2 573.2 L861.5 568.0 L861.5 578.4Z"/>
</g>
<g fill="none" stroke="#8a8a8a" stroke-width="1"><path d="M964.6 331.4 l3 -3 3 3 M964.6 579 l3 3 3 -3"/></g>
</svg>

<!-- right dock -->
<div class="a" style="left:1023px;top:76px;width:1px;height:704px;background:#b6b6b6"></div>
<div class="a" style="left:1024px;top:76px;width:37px;height:11px;background:#dcdcdc"></div>
<div class="a" style="left:1029px;top:124.5px;width:27.5px;height:22px;background:#b9b9b9;border-radius:2.5px"></div>
<div class="a" style="left:1024px;top:204px;width:37px;height:1px;background:#dcdcdc"></div>
<div class="a" style="left:1024px;top:375.5px;width:37px;height:1px;background:#dcdcdc"></div>
<div class="a" style="left:1024px;top:440px;width:37px;height:1px;background:#dcdcdc"></div>
<div class="a" style="left:1024px;top:478px;width:37px;height:1px;background:#dcdcdc"></div>
<div class="a" style="left:1024px;top:570.5px;width:37px;height:1px;background:#dcdcdc"></div>
<div class="a" style="left:1024px;top:661px;width:37px;height:1px;background:#d6d6d6"></div>
<svg style="left:0;top:0" width="1080" height="797" viewBox="0 0 1080 797">
<defs><linearGradient id="dg1" x1="0" x2="1" y1="0" y2="0"><stop offset="0" stop-color="#3a3a3a"/><stop offset="1" stop-color="#dedede"/></linearGradient>
<radialGradient id="dg2" cx="0" cy="1" r="1"><stop offset="0" stop-color="#e6e6e6"/><stop offset="1" stop-color="#2e2e2e"/></radialGradient>
<g id="dgrip" stroke="#c8c8c8" stroke-width="1" fill="none"><path d="M.5 0v4M2.5 0v4M4.5 0v4M6.5 0v4M8.5 0v4M10.5 0v4M12.5 0v4M14.5 0v4M16.5 0v4"/></g></defs>
<path d="M1051.6 78.6 l-2.4 2.4 2.4 2.4 M1055.6 78.6 l-2.4 2.4 2.4 2.4" fill="none" stroke="#3a3a3a" stroke-width="1.3"/>
<use href="#dgrip" x="1034" y="90"/><use href="#dgrip" x="1034" y="208"/><use href="#dgrip" x="1034" y="378.6"/><use href="#dgrip" x="1034" y="444"/><use href="#dgrip" x="1034" y="482"/><use href="#dgrip" x="1034" y="573.6"/>
<g fill="#4a4a4a">
<!-- palette -->
<path d="M1044.4 103.4 c5.4 0 9 3 9 6.4 c0 2.4 -2 3.4 -4 3.4 c-1.6 0 -2.6 .6 -2.6 1.8 c0 1.4 -1.2 1.8 -3 1.8 c-5 0 -8.6 -2.8 -8.6 -6.6 c0 -3.8 4 -6.800000000000001 9.2 -6.800000000000001z"/>
<g fill="#f0f0f0"><circle cx="1039" cy="110.6" r="1.5"/><circle cx="1041.6" cy="114" r="1.5"/><circle cx="1045.6" cy="114.4" r="1.4"/><ellipse cx="1047.8" cy="108.4" rx="3.2" ry="2.2" transform="rotate(-25 1047.8 108.4)"/></g>
<!-- stroke -->
<rect x="1035" y="130.2" width="17" height="2.4"/><rect x="1035" y="135.4" width="17" height="2.2"/><rect x="1035" y="140.2" width="17" height="1.5"/>
<!-- gradient -->
<rect x="1036" y="156.6" width="15.6" height="10.8" fill="url(#dg1)" stroke="#4a4a4a" stroke-width="1"/>
<!-- transparency -->
<circle cx="1041" cy="186.4" r="5.8"/><circle cx="1046.4" cy="191" r="5.6" fill="#9e9e9e" stroke="#6a6a6a" stroke-width=".6" opacity=".92"/>
<!-- sliders -->
<g fill="none" stroke="#4a4a4a" stroke-width="1.1"><path d="M1036 222.4 H1051.6 M1036 227.6 H1051.6 M1036 232.8 H1051.6"/><circle cx="1041" cy="222.4" r="1.7" fill="#f0f0f0"/><circle cx="1046.8" cy="227.6" r="1.7" fill="#f0f0f0"/><circle cx="1041" cy="232.8" r="1.7" fill="#f0f0f0"/></g>
<!-- libraries -->
<g fill="none" stroke="#4a4a4a" stroke-width="1.3"><path d="M1038.6 247.6 h-2.2 v11.6 h11 v-2"/><rect x="1039" y="245.6" width="11.6" height="11.4" fill="#f4f4f4"/></g><path d="M1044.6 245.6 h5.4 v6.4 l-2.7 -1.8 -2.7 1.8z"/>
<!-- appearance-like -->
<path d="M1037 273.4 C1045 273.6 1051.4 279 1051.6 287 H1037Z" fill="url(#dg2)" stroke="#4a4a4a" stroke-width="1"/>
<!-- swatches -->
<g><rect x="1036" y="301.6" width="16" height="10.6" fill="#f0f0f0" stroke="#4a4a4a" stroke-width="1.1"/><rect x="1036.6" y="302" width="4.8" height="4.4"/><rect x="1046.4" y="302" width="5" height="4.4" fill="#8a8a8a"/><rect x="1041.6" y="307" width="4.6" height="4.6" fill="#8a8a8a"/><path d="M1041.5 301.6 v10.6 M1046.3 301.6 v10.6 M1036 306.8 h16" stroke="#4a4a4a" stroke-width=".9"/></g>
<!-- brushes -->
<path d="M1039.4 333.4 h9.6 l-.8 7 h-8z"/><path d="M1042 333.6 V326.6 l-1.4 -3 M1044.6 333.6 V327.4 l0 -4.400000000000001 M1047 333.6 V328 l2.6 -2.6" stroke="#4a4a4a" stroke-width="1.7" fill="none"/><path d="M1048 327 l2 -3.4 2.400000000000001 2.6z"/>
<!-- symbols (club) -->
<circle cx="1044" cy="353.4" r="3.5"/><circle cx="1040.4" cy="358.6" r="3.5"/><circle cx="1047.6" cy="358.6" r="3.5"/><path d="M1043.2 357 h1.6 l1.6 7.6 h-4.8z"/>
<!-- appearance (sun) -->
<circle cx="1044" cy="398" r="6"/><circle cx="1044" cy="398" r="8.4" fill="none" stroke="#4a4a4a" stroke-width="1.3" stroke-dasharray="1.3 2"/>
<!-- graphic styles -->
<rect x="1041.4" y="418.6" width="10.6" height="10.6" fill="#f4f4f4" stroke="#4a4a4a" stroke-width="1.2"/><rect x="1037.8" y="426.6" width="5.8" height="5.8" fill="#8a8a8a" stroke="#4a4a4a" stroke-width="1.1"/><rect x="1036.4" y="424.6" width="5.4" height="5.4" fill="#f4f4f4" stroke="#4a4a4a" stroke-width="1.1"/>
<!-- comment -->
<path d="M1037.6 455.4 h13 a1.6 1.6 0 0 1 1.6 1.6 v7.4 a1.6 1.6 0 0 1 -1.6 1.6 h-6.4 l-3.6 3.4 v-3.4 h-3 a1.6 1.6 0 0 1 -1.6 -1.6 v-7.4 a1.6 1.6 0 0 1 1.6 -1.6z"/>
<!-- pathfinder -->
<rect x="1037.4" y="494.6" width="8" height="8"/><rect x="1042.2" y="499.6" width="8.6" height="8.4" stroke="#f0f0f0" stroke-width="1"/>
<!-- transform -->
<g><rect x="1038.6" y="522.6" width="10.6" height="10.8" fill="none" stroke="#4a4a4a" stroke-width="1.1" stroke-dasharray="2 1.4"/><rect x="1036.6" y="520.6" width="3.4" height="3.4"/><rect x="1047.8" y="520.6" width="3.4" height="3.4"/><rect x="1036.6" y="532" width="3.4" height="3.4"/><rect x="1047.8" y="532" width="3.4" height="3.4"/><rect x="1043" y="527" width="1.8" height="1.8"/></g>
<!-- align -->
<rect x="1036.8" y="546.6" width="1.4" height="15.4"/><rect x="1039.6" y="548.6" width="6.4" height="4.8"/><rect x="1039.6" y="555.4" width="11.8" height="4.8"/>
<!-- wheel -->
<g fill="none" stroke="#4a4a4a"><circle cx="1043.4" cy="593" r="5.4" stroke-width="1.5"/><circle cx="1043.4" cy="593" r="2" stroke-width="1.1"/><path d="M1043.4 584.6 v17 M1035 593 h17 M1037.4 587 l12 12 M1049.4 587 l-12 12" stroke-width="1.1"/></g>
<!-- info -->
<circle cx="1043.4" cy="619.2" r="7"/><g fill="#f0f0f0"><circle cx="1043.4" cy="615.4" r="1.3"/><path d="M1041.6 617.8 h2.800000000000001 v4.600000000000001 h1 v1.2 h-4.2 v-1.2 h1 v-3.4 h-1z"/></g>
<!-- layers -->
<path d="M1043.4 639 l7.6 4.2 -7.6 4.2 -7.6 -4.2z"/><path d="M1036.6 647.2 l6.8 3.8 6.8 -3.8" fill="none" stroke="#4a4a4a" stroke-width="1.8"/>
</g>
</svg>

<!-- watermark -->
<div class="t sans" style="left:54px;top:765.5px;font-size:21px;font-weight:700;color:rgba(255,255,255,.86);letter-spacing:.4px;text-shadow:0 0 1.5px rgba(0,0,0,.5),0 1px 2px rgba(0,0,0,.4),1px 0 1.5px rgba(0,0,0,.25),-1px 0 1.5px rgba(0,0,0,.2);opacity:.97">大数跨境</div>
<svg style="left:0;top:0;filter:drop-shadow(0 0 1px rgba(0,0,0,.5)) drop-shadow(0 1px 1.5px rgba(0,0,0,.35))" width="1080" height="797" viewBox="0 0 1080 797">
<g fill="none" stroke="#fff" stroke-linecap="round" stroke-linejoin="round" opacity=".9">
<path d="M10.8 770.4 l3.8 -3.6 v19.4" stroke-width="3.4"/>
<path d="M19.4 772.6 c-2.6 4.6 -1 10.4 3.6 12.2 c4.4 1.6 8.4 -1.200000000000001 9.200000000000001 -5.4" stroke-width="3.4"/>
<circle cx="28" cy="769.4" r="3.3" stroke-width="2.2"/>
<ellipse cx="40" cy="769.8" rx="5.8" ry="4" stroke-width="2.2"/>
</g>
</svg>

</body>
</html>
